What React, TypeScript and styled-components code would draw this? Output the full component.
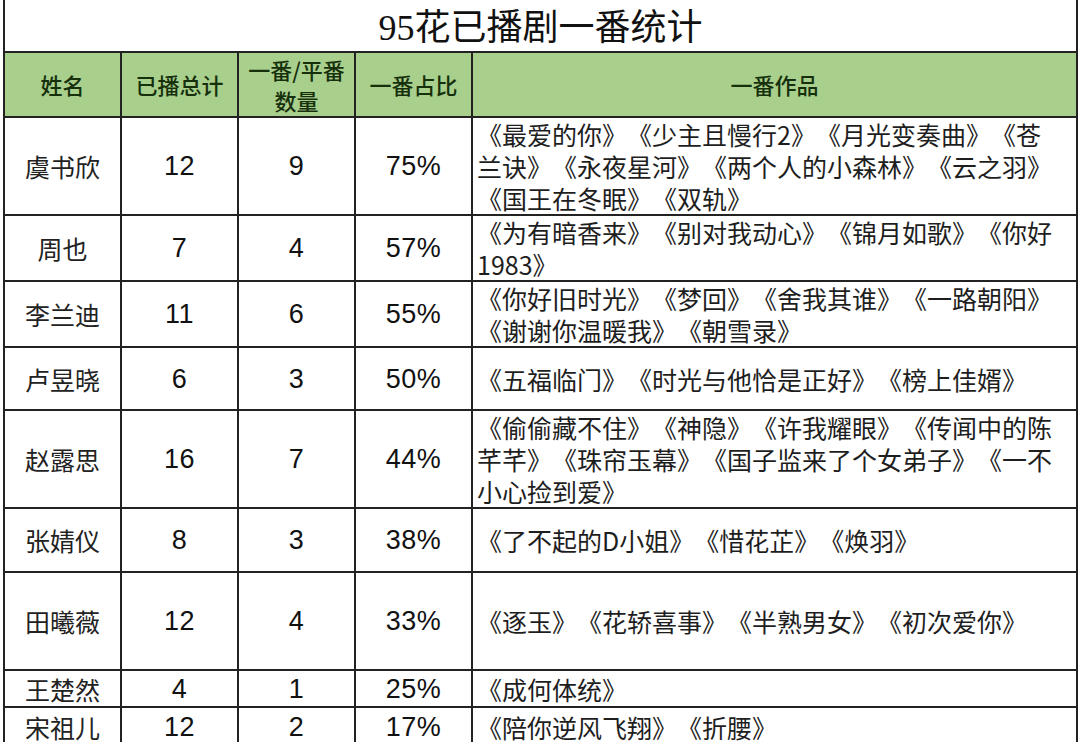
import * as React from 'react'
import styled, { createGlobalStyle } from 'styled-components'

const GlobalStyle = createGlobalStyle`
  html, body {
    margin: 0;
    padding: 0;
    background: #ffffff;
  }
  body {
    font-family: "Noto Sans CJK SC", "Noto Sans", sans-serif;
    color: #1c1c1c;
  }
`

const LINE = '2px solid #222'

const Sheet = styled.table`
  margin-left: 3px;
  width: 1075px;
  border-collapse: collapse;
  table-layout: fixed;
  border-left: ${LINE};
  border-right: ${LINE};
`

const TitleCell = styled.td`
  height: 47px;
  padding: 4px 0 0;
  border-bottom: ${LINE};
  text-align: center;
  vertical-align: middle;
  font-family: "Liberation Serif", "Noto Sans CJK SC", serif;
  font-size: 36px;
  line-height: 44px;
  color: #111;
`

const HeadCell = styled.th<{ $h: number }>`
  height: ${(p) => p.$h}px;
  padding: 0;
  border: ${LINE};
  background: #a9cf8d;
  color: #16300c;
  font-family: "Noto Sans CJK SC", sans-serif;
  font-size: 22px;
  font-weight: 500;
  line-height: 31px;
  text-align: center;
  vertical-align: middle;
`

const NameCell = styled.td<{ $h: number }>`
  height: ${(p) => p.$h}px;
  padding: 0;
  border: ${LINE};
  text-align: center;
  vertical-align: middle;
  font-family: "Noto Sans CJK SC", sans-serif;
  font-size: 25px;
  line-height: 32px;
  color: #222;
`

const NumCell = styled.td`
  padding: 0;
  border: ${LINE};
  text-align: center;
  vertical-align: middle;
  font-family: "Liberation Sans", Arial, sans-serif;
  font-size: 27px;
  letter-spacing: 0.5px;
  line-height: 32px;
  color: #111;
`

const WorkCell = styled.td`
  padding: 0 14px 0 4px;
  border: ${LINE};
  text-align: left;
  vertical-align: middle;
  font-family: "Noto Sans CJK SC", sans-serif;
  font-size: 25px;
  line-height: 32px;
  color: #1e1e1e;
  text-spacing-trim: space-all;
  text-autospace: no-autospace;
  word-break: normal;
  line-break: strict;
`

type Row = {
  name: string
  total: string
  first: string
  ratio: string
  works: string
  h: number
}

// heights are the row pitch minus the rule
const rows: Row[] = [
  { name: '虞书欣', total: '12', first: '9', ratio: '75%', works: '《最爱的你》《少主且慢行2》《月光变奏曲》《苍兰诀》《永夜星河》《两个人的小森林》《云之羽》《国王在冬眠》《双轨》', h: 96 },
  { name: '周也', total: '7', first: '4', ratio: '57%', works: '《为有暗香来》《别对我动心》《锦月如歌》《你好1983》', h: 62 },
  { name: '李兰迪', total: '11', first: '6', ratio: '55%', works: '《你好旧时光》《梦回》《舍我其谁》《一路朝阳》《谢谢你温暖我》《朝雪录》', h: 63 },
  { name: '卢昱晓', total: '6', first: '3', ratio: '50%', works: '《五福临门》《时光与他恰是正好》《榜上佳婿》', h: 61 },
  { name: '赵露思', total: '16', first: '7', ratio: '44%', works: '《偷偷藏不住》《神隐》《许我耀眼》《传闻中的陈芊芊》《珠帘玉幕》《国子监来了个女弟子》《一不小心捡到爱》', h: 96 },
  { name: '张婧仪', total: '8', first: '3', ratio: '38%', works: '《了不起的D小姐》《惜花芷》《焕羽》', h: 62 },
  { name: '田曦薇', total: '12', first: '4', ratio: '33%', works: '《逐玉》《花轿喜事》《半熟男女》《初次爱你》', h: 96 },
  { name: '王楚然', total: '4', first: '1', ratio: '25%', works: '《成何体统》', h: 35 },
  { name: '宋祖儿', total: '12', first: '2', ratio: '17%', works: '《陪你逆风飞翔》《折腰》', h: 38 },
]

const App = () => {
  return (
    <>
      <GlobalStyle />
      <Sheet>
        <colgroup>
          <col style={{ width: 117 }} />
          <col style={{ width: 117 }} />
          <col style={{ width: 117 }} />
          <col style={{ width: 117 }} />
          <col />
        </colgroup>
        <thead>
          <tr>
            <TitleCell colSpan={5}>95花已播剧一番统计</TitleCell>
          </tr>
          <tr>
            <HeadCell $h={63}>姓名</HeadCell>
            <HeadCell $h={63}>已播总计</HeadCell>
            <HeadCell $h={63}>
              一番/平番
              <br />
              数量
            </HeadCell>
            <HeadCell $h={63}>一番占比</HeadCell>
            <HeadCell $h={63}>一番作品</HeadCell>
          </tr>
        </thead>
        <tbody>
          {rows.map((r) => (
            <tr key={r.name}>
              <NameCell $h={r.h}>{r.name}</NameCell>
              <NumCell>{r.total}</NumCell>
              <NumCell>{r.first}</NumCell>
              <NumCell>{r.ratio}</NumCell>
              <WorkCell>{r.works}</WorkCell>
            </tr>
          ))}
        </tbody>
      </Sheet>
    </>
  )
}

export default App
